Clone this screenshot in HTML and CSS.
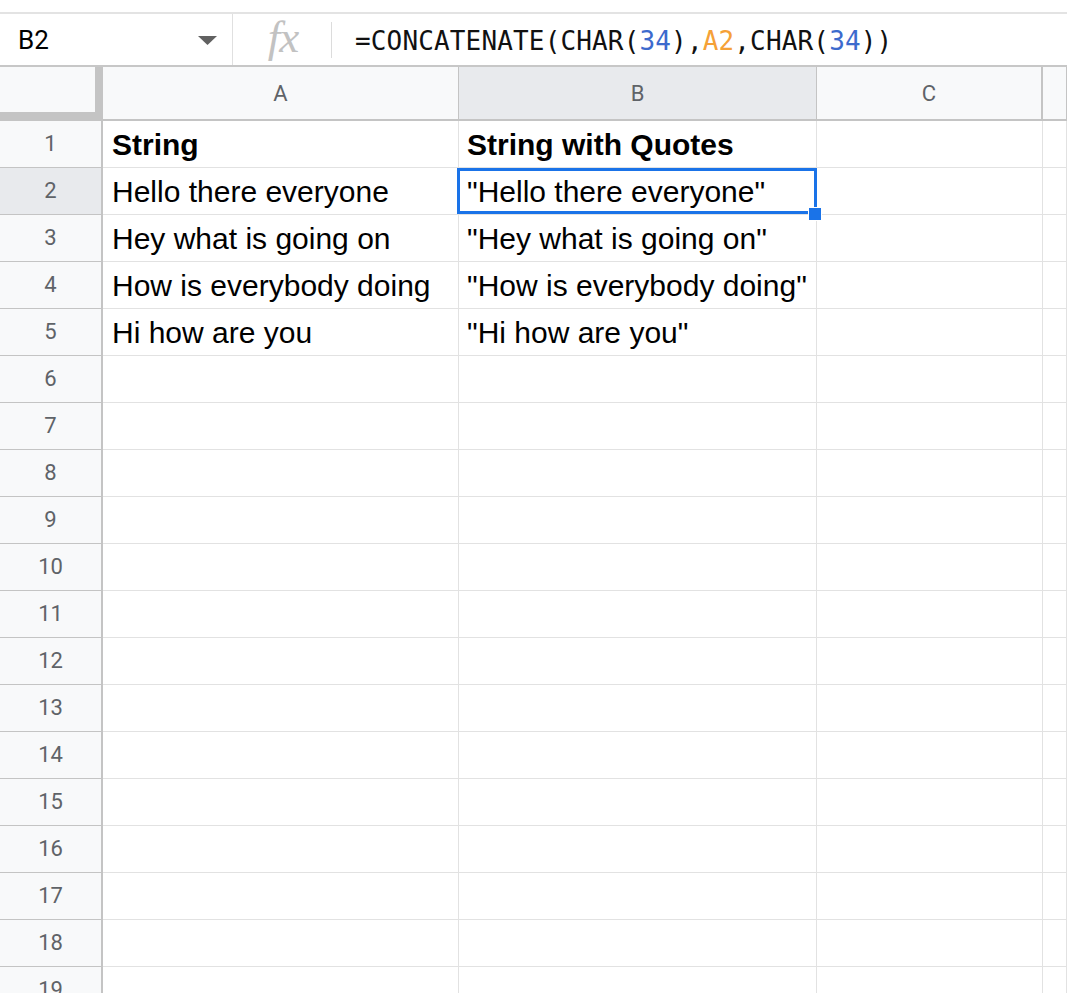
FILE: index.html
```html
<!DOCTYPE html>
<html>
<head>
<meta charset="utf-8">
<link rel="stylesheet" href="styles.css">
</head>
<body>
<div class="app">
  <div class="topgap"></div>
  <div class="formula-bar">
    <div class="namebox">
      <span class="ref">B2</span>
      <svg class="caret" width="19" height="9" viewBox="0 0 19 9"><path d="M0 0 L19 0 L9.5 9 Z" fill="#616161"/></svg>
    </div>
    <div class="fx"><span>fx</span></div>
    <div class="formula">=CONCATENATE(CHAR(<span class="num">34</span>),<span class="ref-a2">A2</span>,CHAR(<span class="num">34</span>))</div>
  </div>
  <div class="sheet">
    <div class="row head">
      <div class="rh corner"></div>
      <div class="c ca">A</div>
      <div class="c cb sel">B</div>
      <div class="c cc">C</div>
      <div class="c cd"></div>
    </div>
    <div class="row"><div class="rh">1</div><div class="c ca b">String</div><div class="c cb b">String with Quotes</div><div class="c cc"></div><div class="c cd"></div></div>
    <div class="row top"><div class="rh sel">2</div><div class="c ca">Hello there everyone</div><div class="c cb active">"Hello there everyone"<span class="selbox"></span><span class="handle"></span></div><div class="c cc"></div><div class="c cd"></div></div>
    <div class="row"><div class="rh">3</div><div class="c ca">Hey what is going on</div><div class="c cb">"Hey what is going on"</div><div class="c cc"></div><div class="c cd"></div></div>
    <div class="row"><div class="rh">4</div><div class="c ca">How is everybody doing</div><div class="c cb">"How is everybody doing"</div><div class="c cc"></div><div class="c cd"></div></div>
    <div class="row"><div class="rh">5</div><div class="c ca">Hi how are you</div><div class="c cb">"Hi how are you"</div><div class="c cc"></div><div class="c cd"></div></div>
    <div class="row"><div class="rh">6</div><div class="c ca"></div><div class="c cb"></div><div class="c cc"></div><div class="c cd"></div></div>
    <div class="row"><div class="rh">7</div><div class="c ca"></div><div class="c cb"></div><div class="c cc"></div><div class="c cd"></div></div>
    <div class="row"><div class="rh">8</div><div class="c ca"></div><div class="c cb"></div><div class="c cc"></div><div class="c cd"></div></div>
    <div class="row"><div class="rh">9</div><div class="c ca"></div><div class="c cb"></div><div class="c cc"></div><div class="c cd"></div></div>
    <div class="row"><div class="rh">10</div><div class="c ca"></div><div class="c cb"></div><div class="c cc"></div><div class="c cd"></div></div>
    <div class="row"><div class="rh">11</div><div class="c ca"></div><div class="c cb"></div><div class="c cc"></div><div class="c cd"></div></div>
    <div class="row"><div class="rh">12</div><div class="c ca"></div><div class="c cb"></div><div class="c cc"></div><div class="c cd"></div></div>
    <div class="row"><div class="rh">13</div><div class="c ca"></div><div class="c cb"></div><div class="c cc"></div><div class="c cd"></div></div>
    <div class="row"><div class="rh">14</div><div class="c ca"></div><div class="c cb"></div><div class="c cc"></div><div class="c cd"></div></div>
    <div class="row"><div class="rh">15</div><div class="c ca"></div><div class="c cb"></div><div class="c cc"></div><div class="c cd"></div></div>
    <div class="row"><div class="rh">16</div><div class="c ca"></div><div class="c cb"></div><div class="c cc"></div><div class="c cd"></div></div>
    <div class="row"><div class="rh">17</div><div class="c ca"></div><div class="c cb"></div><div class="c cc"></div><div class="c cd"></div></div>
    <div class="row"><div class="rh">18</div><div class="c ca"></div><div class="c cb"></div><div class="c cc"></div><div class="c cd"></div></div>
    <div class="row"><div class="rh">19</div><div class="c ca"></div><div class="c cb"></div><div class="c cc"></div><div class="c cd"></div></div>
  </div>
</div>
</body>
</html>
```

FILE: styles.css
```css
html, body {
  margin: 0;
  padding: 0;
  background: #ffffff;
}
body {
  width: 1067px;
  height: 993px;
  overflow: hidden;
  font-family: "Liberation Sans", Arial, sans-serif;
}
.app {
  width: 1067px;
}
.topgap {
  height: 12px;
}
.formula-bar {
  display: flex;
  align-items: center;
  height: 51px;
  border-top: 2px solid #e3e3e3;
  border-bottom: 2px solid #c7c7c7;
}
.namebox {
  display: flex;
  align-items: center;
  justify-content: space-between;
  box-sizing: border-box;
  width: 233px;
  height: 51px;
  padding: 0 15px 0 18px;
  border-right: 1px solid #e0e0e0;
}
.ref {
  font-family: Roboto, "Noto Sans", sans-serif;
  font-size: 26px;
  color: #000;
  padding-top: 1px;
}
.caret {
  display: block;
  margin-top: 2px;
}
.fx {
  display: flex;
  align-items: center;
  justify-content: center;
  box-sizing: border-box;
  width: 99px;
  height: 36px;
  border-right: 1px solid #dcdcdc;
}
.fx span {
  font-family: "Liberation Serif", serif;
  font-style: italic;
  font-size: 45px;
  color: #c2c2c2;
  line-height: 1;
  margin-top: -5px;
  margin-left: 2px;
  letter-spacing: -1px;
}
.formula {
  padding-left: 23px;
  font-family: "DejaVu Sans Mono", monospace;
  font-size: 26px;
  color: #111;
  white-space: nowrap;
  letter-spacing: 0.15px;
  padding-top: 2px;
}
.num {
  color: #3c6acd;
}
.ref-a2 {
  color: #f5a137;
}
.sheet {
  display: flex;
  flex-direction: column;
}
.row {
  display: flex;
  height: 47px;
}
.row.top {
  position: relative;
  z-index: 2;
}
.row.head {
  height: 54px;
}
.rh {
  box-sizing: border-box;
  width: 103px;
  flex: none;
  background: #f8f9fa;
  border-right: 2px solid #c4c4c4;
  border-bottom: 1px solid #c4c4c4;
  font-family: Roboto, "Noto Sans", sans-serif;
  font-size: 22px;
  color: #5f6368;
  text-align: center;
  line-height: 46px;
}
.rh.sel {
  background: #e8eaed;
}
.rh.corner {
  border-right: 8px solid #c4c4c4;
  border-bottom: 9px solid #c4c4c4;
}
.c {
  box-sizing: border-box;
  flex: none;
  position: relative;
  border-right: 1px solid #e2e2e2;
  border-bottom: 1px solid #e2e2e2;
  padding-left: 9px;
  font-size: 30px;
  line-height: 48px;
  color: #000;
  white-space: nowrap;
}
.c.active {
  z-index: 3;
}
.ca { width: 356px; }
.cb { width: 358px; padding-left: 8px; }
.cc { width: 226px; }
.cd { flex: 1; }
.c.b {
  font-weight: bold;
}
.head .c {
  background: #f8f9fa;
  border-right: 1px solid #c4c4c4;
  border-bottom: 2px solid #c4c4c4;
  text-align: center;
  padding-left: 0;
  font-family: Roboto, "Noto Sans", sans-serif;
  font-size: 22px;
  color: #5f6368;
  line-height: 54px;
}
.head .c.sel {
  background: #e8eaed;
}
.head .c.cc {
  border-right: 2px solid #c4c4c4;
}
.selbox {
  position: absolute;
  left: -2px;
  top: 0;
  right: -1px;
  bottom: 0;
  border: 3px solid #1a73e8;
  pointer-events: none;
}
.handle {
  position: absolute;
  right: -6px;
  bottom: -7px;
  width: 12px;
  height: 12px;
  background: #1a73e8;
  border: 1px solid #ffffff;
}
```
